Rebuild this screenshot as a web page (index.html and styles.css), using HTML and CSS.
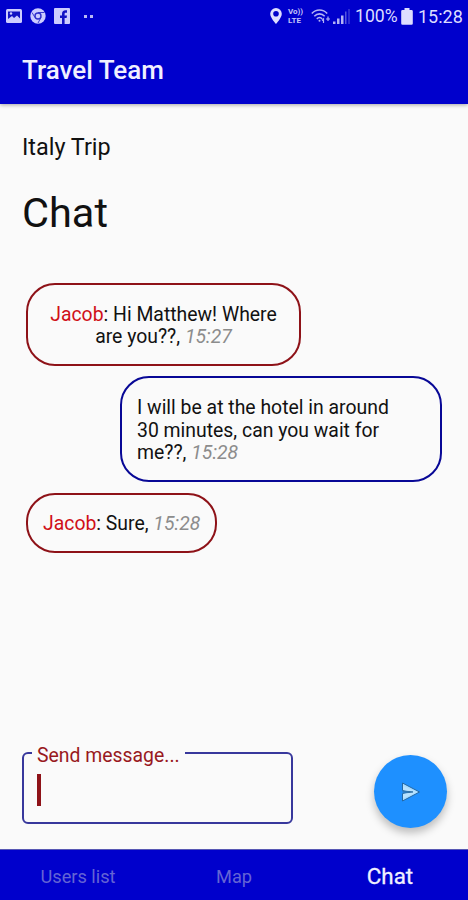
FILE: index.html
```html
<!DOCTYPE html>
<html lang="en">
<head>
    <meta charset="UTF-8">
    <meta name="viewport" content="width=device-width, initial-scale=1.0">
    <title>Travel Team</title>
    <link rel="stylesheet" href="styles.css">
</head>
<body>
    <div class="app">
        <header class="top">
            <div class="status-bar">
                <div class="status-left">
                    <svg width="16" height="16" viewBox="0 0 16 16"><rect x="0" y="1" width="16" height="14" rx="1.5" fill="#ccccff"/><path d="M2 3.500h12v7l-3-3-3 2.500-2-2-4 3z" fill="#1212c4"/><circle cx="5" cy="5.500" r="1.200" fill="#ccccff"/></svg>
                    <svg width="16" height="16" viewBox="0 0 16 16"><circle cx="8" cy="8" r="7.700" fill="#ccccff"/><path d="M8 4.500h6.500M5 9.500L2 4.500M11 9.500L8 15" stroke="#3c3ccf" stroke-width="1"/><circle cx="8" cy="8" r="3" fill="#ccccff" stroke="#3030cc" stroke-width="1.400"/></svg>
                    <svg width="16" height="16" viewBox="0 0 16 16"><rect width="16" height="16" rx="1" fill="#ccccff"/><path d="M8 16v-6H6V7.500h2V6c0-2.500 1.300-3.700 3.500-3.700H13v2.500h-1.200c-.9 0-1.200.4-1.200 1.200v1.500H13l-.4 2.500h-2v6z" fill="#1212c4"/></svg>
                    <span class="dots"><i></i><i></i></span>
                </div>
                <div class="status-right">
                    <svg width="12" height="16" viewBox="0 0 12 16"><path fill-rule="evenodd" d="M6 0a5.800 5.800 0 0 0-5.800 5.800C.2 10 6 16 6 16s5.800-6 5.800-10.200A5.800 5.800 0 0 0 6 0zm0 3a2.800 2.800 0 1 1 0 5.600A2.800 2.800 0 0 1 6 3z" fill="#ddddff"/></svg>
                    <span class="volte"><span>Vo))</span><span>LTE</span></span>
                    <svg class="wifi" width="20" height="16" viewBox="0 0 20 16" fill="none" stroke="#b4b4f4" stroke-width="1.600"><path d="M.8 5.500C5 .8 12 .8 16.200 5.500M3.300 8.200c3-3.100 7.400-3.100 10.400 0M5.800 10.800c1.700-1.600 3.700-1.600 5.400 0"/><circle cx="8.500" cy="12.800" r="1" fill="#b4b4f4" stroke="none"/><path d="M12.500 15v-4l-1.500 1.500M17 8.500v4.500M15 11h4" stroke-width="1.200"/></svg>
                    <svg class="signal" width="17" height="16" viewBox="0 0 17 16"><path d="M0 16v-2.500h2.500V16zM4 16v-5.500h2.500V16zM8 16V7.500h2.500V16z" fill="#b4b4f4"/><path d="M12 16V3.500h1.500V16zM15.500 16V1h1v15z" fill="#5656dc"/></svg>
                    <span class="battery-text">100%</span>
                    <svg class="battery" width="12" height="17" viewBox="0 0 12 17"><path d="M3.500 0h5v2H10.500q1.300 0 1.300 1.300V15.500q0 1.300-1.300 1.300h-9Q.2 16.800.2 15.500V3.300Q.2 2 1.500 2h2z" fill="#ddddff"/></svg>
                    <span class="clock">15:28</span>
                </div>
            </div>
            <div class="title-bar">Travel Team</div>
        </header>

        <main class="content">
            <p class="trip-name">Italy Trip</p>
            <h1>Chat</h1>

            <div class="messages">
                <div class="bubble received wide"><span class="author">Jacob</span>: Hi Matthew! Where<br>are you??, <span class="time">15:27</span></div>
                <div class="bubble sent">I will be at the hotel in around<br>30 minutes, can you wait for<br>me??, <span class="time">15:28</span></div>
                <div class="bubble received"><span class="author">Jacob</span>: Sure, <span class="time">15:28</span></div>
            </div>

            <div class="composer">
                <fieldset class="message-box">
                    <legend>Send message...</legend>
                    <div class="cursor"></div>
                </fieldset>
                <button class="send" aria-label="Send">
                    <svg width="20" height="20" viewBox="0 0 20 20"><path d="M1.500 1L18.500 10 1.500 19V11.500L12 10 1.500 8.500z" fill="#a8dcff" stroke="#2468a4" stroke-width="1"/><path d="M2 4v4L14 10 2 12v4.500L16 10z" fill="#b8e2ff"/><path d="M1.500 9.900H12" stroke="#3474a8" stroke-width="1.200"/></svg>
                </button>
            </div>
        </main>

        <nav class="tabs">
            <a>Users list</a>
            <a>Map</a>
            <a class="active">Chat</a>
        </nav>
    </div>
</body>
</html>
```
FILE: styles.css
```css
* {
    margin: 0;
    padding: 0;
    box-sizing: border-box;
}

body {
    font-family: Roboto, "Liberation Sans", sans-serif;
    background-color: #fafafa;
    color: #111;
}

svg {
    display: block;
    flex-shrink: 0;
}

.app {
    display: flex;
    flex-direction: column;
    width: 468px;
    height: 900px;
    overflow: hidden;
}

/* Status bar and title */
.top {
    height: 104px;
    background-color: #0000cc;
    box-shadow: 0 1px 4px rgba(0, 0, 0, 0.35);
}

.status-bar {
    display: flex;
    justify-content: space-between;
    height: 34px;
    padding: 0 7px 2px 6px;
    color: #ddddff;
}

.status-left,
.status-right {
    display: flex;
    align-items: center;
}

.status-left {
    gap: 8px;
}

.dots {
    display: flex;
    gap: 3px;
    margin-left: 6px;
}

.dots i {
    width: 3px;
    height: 3px;
    background-color: #b8b8f4;
}

.volte {
    display: flex;
    flex-direction: column;
    width: 16px;
    margin-left: 6px;
    font-size: 8px;
    font-weight: 700;
    line-height: 9.5px;
    color: #c4c4f8;
}

.wifi {
    margin-left: 7px;
}

.signal {
    margin-left: 2px;
}

.battery-text {
    width: 42px;
    margin-left: 5px;
    font-size: 17.6px;
    white-space: nowrap;
}

.battery {
    margin-left: 4px;
}

.clock {
    width: 43px;
    margin-left: 5px;
    font-size: 18px;
    white-space: nowrap;
}

.title-bar {
    padding: 20px 22px 0;
    font-size: 26px;
    font-weight: 500;
    line-height: 32px;
    color: #f0f0ff;
}

/* Chat screen */
.content {
    flex: 1;
    display: flex;
    flex-direction: column;
    padding: 28px 20px 25px 22px;
}

.trip-name {
    font-size: 23.4px;
    line-height: 31px;
}

h1 {
    margin-top: 25px;
    font-size: 41.5px;
    font-weight: 400;
    line-height: 50px;
}

.messages {
    display: flex;
    flex-direction: column;
    align-items: flex-start;
    gap: 10.5px;
    margin-top: 45px;
    padding: 0 6px 0 4px;
}

.bubble {
    padding: 18.5px 15px 15px;
    border: 2px solid #8e1218;
    border-radius: 29px;
    font-size: 19.4px;
    line-height: 22.7px;
    white-space: nowrap;
}

.received {
    text-align: center;
}

.wide {
    width: 275px;
}

.sent {
    align-self: flex-end;
    width: 322px;
    border-color: #080896;
}

.author {
    color: #d01018;
}

.time {
    font-style: italic;
    color: #8c8c8c;
}

/* Message input and send button */
.composer {
    display: flex;
    align-items: flex-end;
    justify-content: space-between;
    margin-top: auto;
}

.message-box {
    width: 271px;
    height: 82px;
    padding: 0 8px;
    border: 2px solid #38389c;
    border-radius: 6px;
}

.message-box legend {
    height: 22px;
    padding: 3px 5px 0;
    font-size: 19.4px;
    line-height: 22px;
    color: #981820;
}

.cursor {
    width: 4px;
    height: 32px;
    margin: 10px 0 0 5px;
    background-color: #8e1218;
}

.send {
    display: flex;
    align-items: center;
    justify-content: center;
    width: 73px;
    height: 73px;
    margin: 0 1px -4px 0;
    border: none;
    border-radius: 50%;
    background-color: #1e90ff;
    box-shadow: 0 5px 8px rgba(0, 0, 0, 0.25);
}

/* Bottom navigation */
.tabs {
    display: grid;
    grid-template-columns: repeat(3, 1fr);
    align-items: center;
    height: 51px;
    padding-top: 2px;
    border-top: 1px solid #5858b4;
    background-color: #0000cc;
    text-align: center;
}

.tabs a {
    font-size: 18.2px;
    line-height: 24px;
    padding-top: 2px;
    color: #6464d4;
}

.tabs .active {
    padding: 0;
    font-size: 22.4px;
    -webkit-text-stroke: 0.3px #f0f0ff;
    color: #f0f0ff;
}
```
